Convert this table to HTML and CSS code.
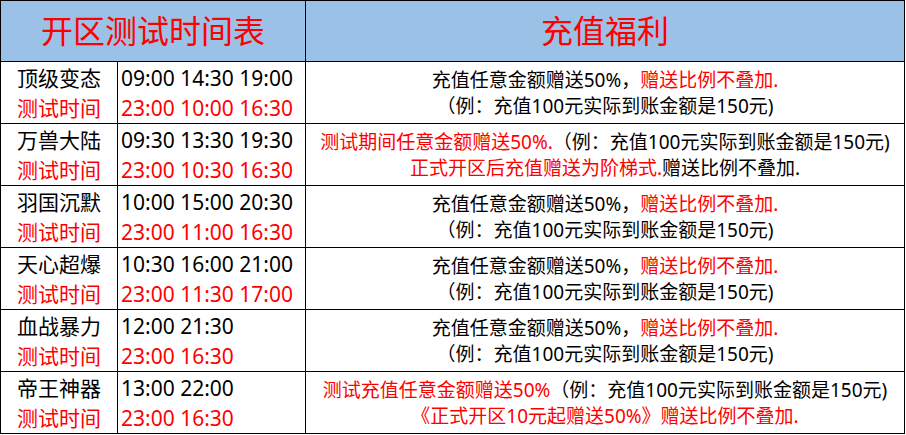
FILE: index.html
```html
<!DOCTYPE html>
<html lang="zh-CN">
<head>
<meta charset="utf-8">
<title>开区测试时间表</title>
<link rel="stylesheet" href="styles.css">
</head>
<body>
<table class="sheet">
  <colgroup>
    <col class="c-name">
    <col class="c-time">
    <col class="c-bonus">
  </colgroup>
  <thead>
    <tr class="head">
      <th colspan="2">开区测试时间表</th>
      <th>充值福利</th>
    </tr>
  </thead>
  <tbody>
    <tr>
      <td class="name"><div>顶级变态</div><div class="red">测试时间</div></td>
      <td class="time"><div>09:00 14:30 19:00</div><div class="red">23:00 10:00 16:30</div></td>
      <td class="bonus"><div>充值任意金额赠送50%，<span class="red">赠送比例不叠加.</span></div><div>（例：充值100元实际到账金额是150元)</div></td>
    </tr>
    <tr>
      <td class="name"><div>万兽大陆</div><div class="red">测试时间</div></td>
      <td class="time"><div>09:30 13:30 19:30</div><div class="red">23:00 10:30 16:30</div></td>
      <td class="bonus"><div><span class="red">测试期间任意金额赠送50%.</span>（例：充值100元实际到账金额是150元)</div><div><span class="red">正式开区后充值赠送为阶梯式.</span>赠送比例不叠加.</div></td>
    </tr>
    <tr>
      <td class="name"><div>羽国沉默</div><div class="red">测试时间</div></td>
      <td class="time"><div>10:00 15:00 20:30</div><div class="red">23:00 11:00 16:30</div></td>
      <td class="bonus"><div>充值任意金额赠送50%，<span class="red">赠送比例不叠加.</span></div><div>（例：充值100元实际到账金额是150元)</div></td>
    </tr>
    <tr>
      <td class="name"><div>天心超爆</div><div class="red">测试时间</div></td>
      <td class="time"><div>10:30 16:00 21:00</div><div class="red">23:00 11:30 17:00</div></td>
      <td class="bonus"><div>充值任意金额赠送50%，<span class="red">赠送比例不叠加.</span></div><div>（例：充值100元实际到账金额是150元)</div></td>
    </tr>
    <tr>
      <td class="name"><div>血战暴力</div><div class="red">测试时间</div></td>
      <td class="time"><div>12:00 21:30</div><div class="red">23:00 16:30</div></td>
      <td class="bonus"><div>充值任意金额赠送50%，<span class="red">赠送比例不叠加.</span></div><div>（例：充值100元实际到账金额是150元)</div></td>
    </tr>
    <tr>
      <td class="name"><div>帝王神器</div><div class="red">测试时间</div></td>
      <td class="time"><div>13:00 22:00</div><div class="red">23:00 16:30</div></td>
      <td class="bonus"><div><span class="red">测试充值任意金额赠送50%</span>（例：充值100元实际到账金额是150元)</div><div class="red">《正式开区10元起赠送50%》赠送比例不叠加.</div></td>
    </tr>
  </tbody>
</table>
</body>
</html>
```
FILE: styles.css
```css
html, body {
  margin: 0;
  padding: 0;
  background: #ffffff;
}

body {
  font-family: "Noto Sans", "Noto Sans CJK SC", sans-serif;
  color: #000000;
}

.sheet {
  border-collapse: collapse;
  table-layout: fixed;
  width: 904px;
}

.c-name { width: 117px; }
.c-time { width: 188px; }
.c-bonus { width: 599px; }

.sheet th,
.sheet td {
  border: 1px solid #000000;
  padding: 0;
  vertical-align: middle;
  white-space: nowrap;
}

.head th {
  height: 60px;
  background: #9bc2e6;
  color: #ff0000;
  font-weight: normal;
  font-size: 32px;
  line-height: 40px;
  text-align: center;
}

.sheet tbody td {
  height: 61px;
}

.name {
  text-align: center;
  font-size: 21px;
  line-height: 30px;
}

.time {
  text-align: left;
  font-size: 21px;
  line-height: 30px;
}

.sheet td.time {
  padding-left: 3px;
}

.bonus {
  text-align: center;
  font-size: 19px;
  line-height: 26px;
}

.red {
  color: #ff0000;
}
```
